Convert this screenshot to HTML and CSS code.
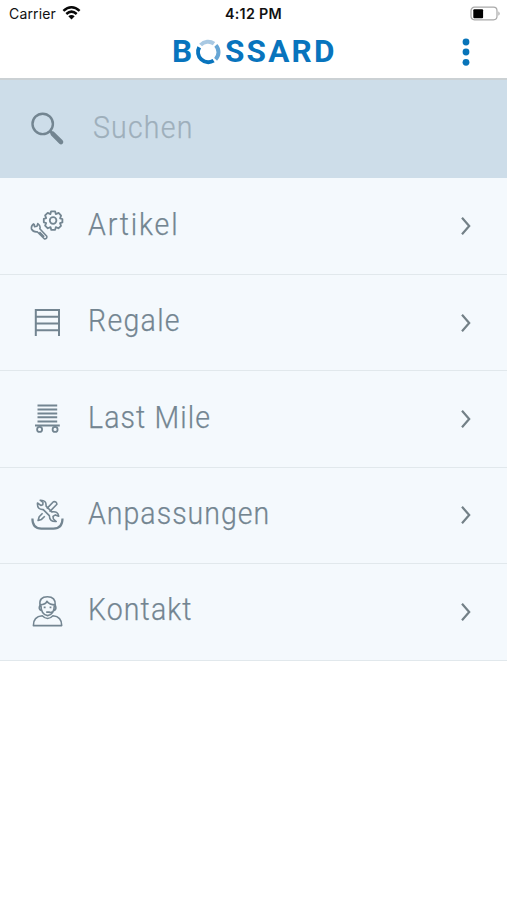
FILE: index.html
```html
<!DOCTYPE html>
<html lang="de">
<head>
<meta charset="utf-8">
<title>Bossard</title>
<link rel="stylesheet" href="styles.css">
</head>
<body>
<header class="header">
  <div class="status">
    <div class="carrier"><span>Carrier</span>
      <svg class="wifi" width="19" height="14" viewBox="0 0 18 14" fill="none" stroke="#080808" stroke-width="2.5"><path d="M.9 4.9Q9-2.3 17.1 4.9M3.8 8Q9 3.3 14.2 8"/><path d="M5.8 10.3Q9 7.6 12.2 10.3L9 13.5Z" fill="#080808" stroke="none"/></svg>
    </div>
    <time class="time">4:12 PM</time>
    <svg class="battery" width="31" height="16" viewBox="0 0 31 16"><rect x="1" y="1.2" width="26" height="12.6" rx="3.5" fill="#fff" stroke="#a9a9a9" stroke-width="1.2"/><rect x="3.3" y="3.3" width="9.8" height="9" rx="1" fill="#000"/><path d="M28.4 5.2Q31 7.5 28.4 9.8Z" fill="#a9a9a9"/></svg>
  </div>
  <div class="nav">
    <div class="logo">
      <span class="logo-b">B</span>
      <svg class="ring" width="26" height="26" viewBox="0 0 26 26" fill="none" stroke-width="4"><path d="M4.2 8.2A10.2 10.2 0 0 0 18.6 21.6" stroke="#0874bd"/><path d="M20.6 20.3A10.2 10.2 0 0 0 20.8 6.3" stroke="#67a6d5"/><path d="M5.6 6A10.2 10.2 0 0 1 19 4.7" stroke="#a9c9e3"/></svg>
      <span class="logo-rest">SSARD</span>
    </div>
    <svg class="dots" width="8" height="28" viewBox="0 0 8 28" fill="#0874b9"><circle cx="4" cy="4" r="3.4"/><circle cx="4" cy="14" r="3.4"/><circle cx="4" cy="24.3" r="3.4"/></svg>
  </div>
</header>
<div class="search">
  <svg class="icon" width="36" height="36" viewBox="0 0 36 36" fill="none" stroke="#738591"><circle cx="12.7" cy="12.9" r="10.2" stroke-width="2.4"/><path d="M20 20.2L22.2 22.3" stroke-width="2.7"/><path d="M22.8 22.8L31 31" stroke-width="4.6" stroke-linecap="round"/></svg>
  <span class="label suchen">Suchen</span>
</div>
<nav class="menu">
  <a class="row">
    <svg class="icon" width="36" height="36" viewBox="0 0 36 36" fill="none" stroke="#738591" stroke-width="1.8" stroke-linejoin="round"><circle cx="23.1" cy="12.5" r="3.3"/><path d="M21.1 3.3H25.1L25.8 6.1L28.6 4.9L31.1 7.6L30.1 10.3L32.4 11V14.4L30 15.1L31 17.8L28.4 20.3L25.8 19.1L25.1 21.9H21.3L20.5 19.1L17.8 20.3L15.1 17.7L16.2 15L13.8 14.3V10.8L16.2 10.1L15.1 7.4L17.7 4.9L20.4 6.1Z"/><path d="M4.2 15.8L4.5 18.7L7 18.2L7.8 15.6Q11 18 9.8 20.7L16.8 28.3Q17.2 30.9 14.5 31L7.2 23.8Q3.4 24.4 1.5 21Q.8 17.4 4.2 15.8M9.5 24L14.2 28.7" stroke-width="1.6"/></svg>
    <span class="label artikel">Artikel</span><svg class="chevron" width="12" height="20" viewBox="0 0 12 20"><path d="M2 1.8L9.2 10L2 18.2"/></svg>
  </a>
  <a class="row">
    <svg class="icon" width="36" height="36" viewBox="0 0 36 36" fill="none" stroke="#738591" stroke-width="2"><path d="M5.8 31V5H29V31M5.8 11.8H29M5.8 18.4H29M5.8 25.2H29"/></svg>
    <span class="label regale">Regale</span><svg class="chevron" width="12" height="20" viewBox="0 0 12 20"><path d="M2 1.8L9.2 10L2 18.2"/></svg>
  </a>
  <a class="row">
    <svg class="icon" width="36" height="36" viewBox="0 0 36 36" fill="none" stroke="#738591" stroke-width="2"><path d="M7.5 4.6H27.2M7.5 8.5H27.2M7.5 12.4H27.2M7.5 16.3H27.2M7.5 20.5H27.2M5 24.6H29.8"/><circle cx="9.6" cy="28.4" r="2.5" stroke-width="1.8"/><circle cx="25.1" cy="28.4" r="2.5" stroke-width="1.8"/></svg>
    <span class="label last">Last Mile</span><svg class="chevron" width="12" height="20" viewBox="0 0 12 20"><path d="M2 1.8L9.2 10L2 18.2"/></svg>
  </a>
  <a class="row">
    <svg class="icon" width="36" height="36" viewBox="0 0 36 36" fill="none" stroke="#738591" stroke-width="1.6" stroke-linejoin="round"><path d="M16.8 11.6L23.4 4.7Q26.8 4.2 26.9 7.3L19.6 14.7M14.8 19.2L11.5 22.4L8.1 23.5L9.2 19.8L12.6 16.3"/><path d="M7.5 6L10.8 8.4L12.8 7.7L13 5.5L10.2 3.2Q16.5 2.9 16.1 9.1L21.8 14.9Q27.9 13.7 28.7 19.2L25.4 17.9L23 19.4L23.4 22L26.2 24.5Q19.5 25 19.3 18.6L13.3 12.6Q6.9 12.8 7.5 6Z"/><path d="M2.4 21.6Q2.4 31.7 11.4 31.7H23.4Q32.5 31.7 32.5 21.6" stroke-width="2.2"/></svg>
    <span class="label anpassungen">Anpassungen</span><svg class="chevron" width="12" height="20" viewBox="0 0 12 20"><path d="M2 1.8L9.2 10L2 18.2"/></svg>
  </a>
  <a class="row">
    <svg class="icon" width="36" height="36" viewBox="0 0 36 36" fill="none" stroke="#738591" stroke-width="1.6" stroke-linejoin="round"><path d="M10 11Q8.9 2.8 17.4 2.8Q25.8 2.8 25.2 11M10 10.7Q16 10.4 16.9 7.2Q19.5 10.7 25.2 10.9M10.9 11Q11 20.7 17.6 21.6Q24.2 20.7 24.4 11M10 11Q8.1 15.3 11.1 16.4M25.2 11Q27 15.3 24.2 16.4Q22.6 18.8 19.2 18.5"/><path d="M13.7 13.3H15.6M19.6 13.3H21.4M16.2 18.1H19.8" stroke-width="1.7"/><path d="M12.3 21.7Q3.1 22.5 3.4 31.6H31.7Q31.9 22.5 22.9 21.7Q17.6 27.2 12.3 21.7Z"/></svg>
    <span class="label kontakt">Kontakt</span><svg class="chevron" width="12" height="20" viewBox="0 0 12 20"><path d="M2 1.8L9.2 10L2 18.2"/></svg>
  </a>
</nav>
</body>
</html>
```
FILE: styles.css
```css
* { box-sizing: border-box; }
body { margin: 0; min-height: 900px; background: #fff; font-family: Roboto, "Liberation Sans", sans-serif; }
.header { height: 80px; border-bottom: 2px solid #cbd1d4; }
.status { display: grid; grid-template-columns: 1fr auto 1fr; align-items: center; height: 27px; padding: 0 6px 0 9px; font-family: Inter, "Liberation Sans", sans-serif; color: #111; }
.carrier { display: flex; align-items: center; gap: 6px; font-size: 14px; letter-spacing: .15px; }
.wifi { margin-top: -2px; }
.time { margin-left: -3px; font-size: 14.3px; font-weight: 600; letter-spacing: .3px; }
.battery { justify-self: end; }
.nav { display: flex; justify-content: space-between; height: 50px; padding: 0 37px 0 172px; }
.logo { display: flex; align-items: center; height: 49px; color: #0874bd; font-size: 31.5px; line-height: 1; font-weight: 700; }
.logo-b { width: 23px; }
.ring { flex: none; }
.logo-rest { padding-left: 4px; letter-spacing: 2.2px; }
.dots { margin-top: 11px; }
.search { display: flex; align-items: center; height: 98px; padding: 0 30px; background: #cddde9; }
.menu { background: #f4f9fd; padding-top: .6px; }
.row { display: flex; align-items: center; height: 96.4px; padding: 0 35px 0 30px; border-bottom: 1.5px solid #e1e8ec; }
.icon { flex: none; }
.label { flex: 1; margin: -3px 0 0 22px; font-size: 31px; line-height: 40px; font-weight: 300; color: #738591; white-space: nowrap; transform: scaleX(.92); transform-origin: left; -webkit-text-stroke: .25px currentColor; }
.suchen { margin-left: 27px; letter-spacing: 1.3px; color: #9eafbb; }
.artikel { letter-spacing: 2px; }
.regale { letter-spacing: 1.4px; }
.last { letter-spacing: 1.2px; }
.anpassungen { letter-spacing: 1.1px; }
.kontakt { letter-spacing: 1.2px; }
.chevron { fill: none; stroke: #738087; stroke-width: 2.2; flex: none; }
```
